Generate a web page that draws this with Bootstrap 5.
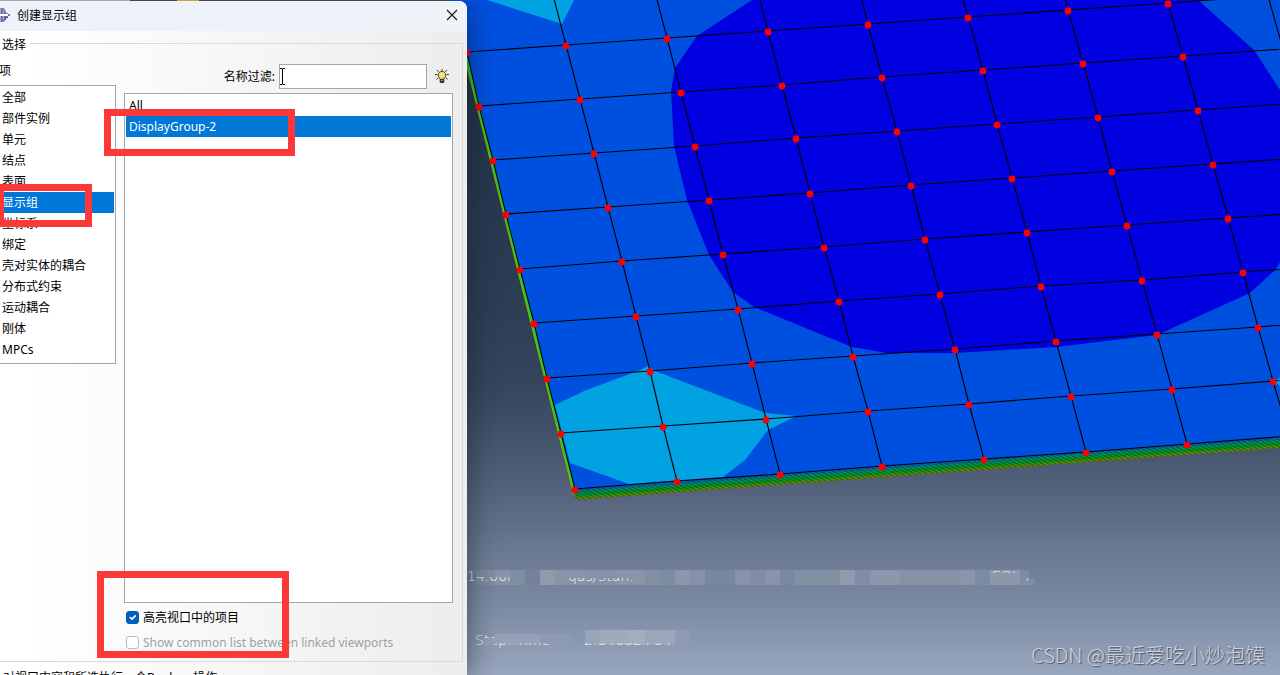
<!DOCTYPE html>
<html lang="zh-CN">
<head>
<meta charset="utf-8">
<meta name="viewport" content="width=device-width, initial-scale=1">
<title>创建显示组</title>
<link href="https://cdn.jsdelivr.net/npm/bootstrap@5.3.0/dist/css/bootstrap.min.css" rel="stylesheet">
<style>
  body { font: 12px/21px "Noto Sans", "Noto Sans CJK SC", sans-serif; color: #000; background: #4d484f; }
  .dialog-pane { width: 467px; padding-top: 1px; background: linear-gradient(90deg, #a8a8a8 130px, #41455c 130px 177px, #d49b3a 177px 199px, #41455c 199px) 0 0 / 450px 1px no-repeat, #0050e0; z-index: 1; }
  .dialog-box { border-top-right-radius: 8px; background: linear-gradient(90deg, #fff 30px, #eee 440px); box-shadow: 2px 4px 28px rgba(20, 24, 32, .5); clip-path: inset(0 -60px 0 0); }
  .title-bar { height: 30px; padding: 0 8px 2px 0; border-top-right-radius: 8px; background: linear-gradient(90deg, #edf2fb, #eff4f9); }
  .title-bar span { margin-left: 7px; }
  .title-bar button, .tip-button { border: 0; background: none; padding: 0; line-height: 0; }
  .group-frame { border: 1px solid #dadada; border-left: 0; margin: 2px 4px 0 0; }
  .group-frame legend { float: none; width: auto; font-size: 12px; line-height: 18px; padding: 3px 4px 0 2px; margin: 0 0 -2px; }
  .items-col { width: 116px; }
  .items-col .caption-line { margin: 0 0 4px -1px; }
  .sunken { background: #fff; border: 1px solid #a5a5aa; padding: 1px; }
  .items-col .sunken { border-left: 0; padding-left: 0; padding-bottom: 3px; }
  .sunken button { display: block; width: 100%; height: 21px; border: 0; background: none; color: #000; padding: 0 2px; text-align: left; line-height: 21px; }
  .sunken button.chosen { background: #0078d7; color: #fff; }
  .results { margin: 0 9px 0 8px; }
  .results .sunken button { padding-left: 3px; }
  .filter-input { width: 148px; height: 25px; border: 1px solid #a5a5aa; background: #fff; padding: 0 4px; }
  .tick-list { padding: 2px 0 6px 2px; }
  .tick-row { height: 25px; gap: 4px; }
  .tick-row .form-check-input { width: 13px; height: 13px; margin: 0; border-color: #999; }
  .tick-row .form-check-input:checked { background-color: #005fb8; border-color: #005fb8; }
  .tick-row .form-check-input:disabled, .tick-row .form-check-input:disabled ~ label { opacity: 1; color: #a0a0a0; border-color: #bbb; }
  .dialog-foot { height: 13px; padding: 5px 3px 0; white-space: nowrap; }
  .marker { position: absolute; border: 7px solid #fc3838; pointer-events: none; z-index: 2; }
  .marker-group { left: 104px; top: 109px; width: 191px; height: 47px; }
  .marker-item { left: -3px; top: 184px; width: 95px; height: 43px; }
  .marker-tick { left: 97px; top: 571px; width: 192px; height: 87px; }
  .text-cursor { position: absolute; left: 1px; top: 4px; }
  .view-pane { background: linear-gradient(#1b2940, #24344a 15%, #2c3d54 46%, #34455c 57%, #47576f 67%, #5a6981 75%, #6b7a92 82%, #7c8ba3 90%, #98a6be); }
  .csdn-mark { position: absolute; right: 15px; bottom: 6px; font: 300 20px/29px "Noto Sans CJK SC", sans-serif; color: #d2d6dd; text-shadow: 1px 1px 1px #475064; white-space: nowrap; }
</style>
<script src="https://cdn.jsdelivr.net/npm/bootstrap@5.3.0/dist/js/bootstrap.bundle.min.js"></script>
</head>
<body class="vh-100 overflow-hidden">
<main class="d-flex h-100 position-relative overflow-hidden">
  <div class="dialog-pane flex-shrink-0 h-100 position-relative">
    <section class="dialog-box d-flex flex-column h-100" aria-label="创建显示组">
      <header class="title-bar d-flex align-items-center flex-shrink-0">
        <svg width="10" height="16" viewBox="0 0 10 16"><path d="M0 1h3l2 1v2h1v2h2v1h2v2H8v1H6v2H5v2l-2 1H0z" fill="#7773ac"/><path d="M0 1h1v14H0zM3 3h1v10H3z" fill="#a5a2ce"/><path d="M0 7h8v2H0z" fill="#fff"/><path d="M5 10h3v1H6v2H5z" fill="#46437b"/></svg>
        <span class="flex-grow-1">创建显示组</span>
        <button type="button" aria-label="关闭"><svg width="14" height="14" viewBox="0 0 14 14"><path d="M2 2l10 10M12 2L2 12" stroke="#1b1b1b" stroke-width="1.2"/></svg></button>
      </header>
      <fieldset class="group-frame d-flex flex-column flex-grow-1">
        <legend>选择</legend>
        <div class="d-flex flex-grow-1">
          <div class="items-col flex-shrink-0 pt-2">
            <div class="caption-line">项</div>
            <div class="sunken">
              <button type="button">全部</button>
              <button type="button">部件实例</button>
              <button type="button">单元</button>
              <button type="button">结点</button>
              <button type="button">表面</button>
              <button type="button" class="chosen">显示组</button>
              <button type="button">坐标系</button>
              <button type="button">绑定</button>
              <button type="button">壳对实体的耦合</button>
              <button type="button">分布式约束</button>
              <button type="button">运动耦合</button>
              <button type="button">刚体</button>
              <button type="button">MPCs</button>
            </div>
          </div>
          <div class="results d-flex flex-column flex-grow-1">
            <div class="d-flex align-items-center justify-content-end mb-1 pt-2 mt-1">
              <label for="filter" class="me-1">名称过滤:</label>
              <div class="position-relative d-flex">
                <input id="filter" type="text" class="filter-input">
                <svg class="text-cursor" width="5" height="17" viewBox="0 0 5 17"><path d="M0 .5h2l.5.5.5-.5h2M2.500 1v15M0 16.500h2l.5-.5.5.5h2" stroke="#000" fill="none"/></svg>
              </div>
              <button type="button" class="tip-button mx-2 me-1" aria-label="提示"><svg width="14" height="15" viewBox="0 0 15 16"><path d="M7.500 0v2M2 1l2 2M13 1l-2 2M0 6h2.500M12.500 6H15M1.500 11l2-1.500M13.500 11l-2-1.500" stroke="#173322"/><path d="M7.500 2.500a4 4 0 0 1 2.700 7L9.500 11h-4l-.7-1.500a4 4 0 0 1 2.700-7z" fill="#f5dc78" stroke="#4b4520"/><path d="M6 4h2v3H6z" fill="#fff0b2"/><path d="M5 11h5v3l-1 1H6l-1-1z" fill="#143427"/><path d="M6 12.500h3" stroke="#9aa89a"/></svg></button>
            </div>
            <div class="sunken flex-grow-1">
              <button type="button">All</button>
              <button type="button" class="chosen">DisplayGroup-2</button>
            </div>
            <div class="tick-list">
              <div class="tick-row d-flex align-items-center"><input class="form-check-input" type="checkbox" id="hl" checked><label for="hl">高亮视口中的项目</label></div>
              <div class="tick-row d-flex align-items-center"><input class="form-check-input" type="checkbox" id="common" disabled><label for="common">Show common list between linked viewports</label></div>
            </div>
          </div>
        </div>
      </fieldset>
      <footer class="dialog-foot flex-shrink-0">对视口内容和所选执行一个Boolean操作</footer>
    </section>
    <div class="marker marker-group"></div>
    <div class="marker marker-item"></div>
    <div class="marker marker-tick"></div>
  </div>
  <div class="view-pane flex-grow-1 h-100 position-relative overflow-hidden">
    <svg class="d-block w-100 h-100" viewBox="467 0 813 675" preserveAspectRatio="xMinYMin slice" role="img" aria-label="网格云图">
      <defs>
        <linearGradient id="rim" gradientUnits="userSpaceOnUse" x1="575" y1="489" x2="575.810" y2="500"><stop offset="0" stop-color="#0058a8"/><stop offset=".3" stop-color="#009888"/><stop offset=".6" stop-color="#00a818"/><stop offset=".85" stop-color="#60a000"/><stop offset="1" stop-color="#907800"/></linearGradient>
        <pattern id="hatch" width="4" height="3" patternUnits="userSpaceOnUse" patternTransform="rotate(28)"><path d="M0 1h4" stroke="#002818" stroke-width="1.200" opacity=".7"/></pattern>
        <clipPath id="low1"><path d="M467 568h8v16h-8zM475 577h40v10h-40zM568 578h70v10h-70z"/></clipPath>
        <clipPath id="top1"><path d="M990 568h25v5h-25zM1022 578h8v4h-8z"/></clipPath>
        <clipPath id="low2"><path d="M470 630h14v18h-14zM484 630h10v8h-10zM494 643h200v6h-200z"/></clipPath>
      </defs>
      <path d="M467 0H1280V438L575 490 467 56z" fill="#0050e0"/>
      <path d="M752 0L697 36 675 68 671 91 674 146 687 200 709 255 733 292 754 307 852 347 887 353H955L1056 347 1157 335 1250 293 1276 269 1280 262V90L1254 50 1198 0z" fill="#0000e0"/>
      <path d="M487 0L562 24 574 0zM555 405L584 391 640 370 648 366 655 371 765 413 797 416 768 430 745 460 723 477 629 484 570 463zM1273 381l7-3v8z" fill="#00a2e2"/>
      <path d="M575 490L1280 438V448L575 500z" fill="url(#rim)"/>
      <path d="M575 490L1280 438V448L575 500z" fill="url(#hatch)"/>
      <path d="M467 65L574 494" stroke="#78b000" stroke-width="2" fill="none"/>
      <path d="M467 59L575 492" stroke="#00d848" stroke-width="2" fill="none"/>
      <path id="mesh" fill="none" stroke="#000" stroke-width="1.100"/>
      <g id="nodes" fill="#f00"></g>
      <g id="mosaic"></g>
      <g fill="#f4f6fa" font-family="DejaVu Sans" font-weight="200" font-size="14">
        <g clip-path="url(#low1)"><text x="467" y="581">14.00r</text><text x="568" y="581">qas/Stan.</text></g>
        <g clip-path="url(#top1)"><text x="991" y="581">COS r</text></g>
        <g clip-path="url(#low2)"><text x="475" y="645">Step: Time</text><text x="584" y="645">2.0400E+04</text></g>
      </g>
    </svg>
    <div class="csdn-mark">CSDN @最近爱吃小炒泡馍</div>
  </div>
</main>
<script>
  // Mesh nodes, one array per row of [x, y]
  const rows = [
    [[467,53],[566,46],[667,39],[768,32],[868,25],[968,18],[1068,11],[1168,4],[1268,-3]],
    [[479,107],[580,100],[681,93],[782,86],[882,78],[983,71],[1083,64],[1183,57],[1283,50]],
    [[493,161],[594,154],[695,147],[796,139],[897,132],[997,125],[1098,118],[1198,111],[1298,104]],
    [[506,215],[608,208],[709,201],[810,194],[911,186],[1012,179],[1112,172],[1213,165],[1314,158]],
    [[520,270],[622,262],[723,255],[824,248],[925,240],[1027,233],[1127,226],[1228,219],[1329,212]],
    [[534,324],[636,317],[738,310],[839,302],[940,295],[1041,287],[1142,281],[1243,273],[1344,266]],
    [[547,379],[650,372],[752,364],[853,357],[955,350],[1056,342],[1157,335],[1258,328],[1359,320]],
    [[561,434],[663,427],[766,420],[868,412],[969,405],[1071,397],[1172,390],[1273,382],[1374,374]],
    [[575,490],[677,482],[780,475],[882,467],[984,460],[1086,453],[1187,445],[1289,437],[1390,429]]
  ];
  const line = pts => 'M' + pts.map(p => p[0] + ' ' + (p[1] - 1)).join('L');
  let d = rows.map(line).join('');
  for (let c = 0; c < 9; c++) {
    const col = rows.map(r => r[c]);
    const first = [2 * col[0][0] - col[1][0], 2 * col[0][1] - col[1][1]];
    d += line(c ? [first, ...col] : col);
  }
  document.getElementById('mesh').setAttribute('d', d);
  document.getElementById('nodes').innerHTML = rows.flat().map(p => `<circle cx="${p[0]}" cy="${p[1]}" r="3.400"/>`).join('');
  // Mosaic tiles: [x, y, width, height, colour]
  const tiles = [
    [476,570,19,15,'#7f8c9f'],[495,570,15,15,'#8793a8'],[510,570,15,15,'#808ea2'],[525,570,15,15,'#74829b'],
    [540,570,15,15,'#9199ad'],[555,570,30,15,'#8994a8'],[585,570,30,15,'#8491a6'],[615,570,30,15,'#8a95aa'],[645,570,15,15,'#8390a4'],
    [660,570,15,15,'#7d8da1'],[675,570,15,15,'#8c97ac'],[690,570,15,15,'#8591a6'],[705,570,30,15,'#7787a0'],
    [735,570,15,15,'#8793a8'],[750,570,15,15,'#808da2'],[765,570,15,15,'#8894a9'],[780,570,15,15,'#7a88a2'],
    [795,570,45,15,'#8290a3'],[840,570,15,15,'#929aae'],[855,570,15,15,'#818da7'],[870,570,30,15,'#8c97ab'],
    [900,570,60,15,'#8591a5'],[960,570,15,15,'#8a96aa'],[975,570,15,15,'#7c8ba1'],[990,570,30,15,'#8c97ab'],[1020,570,9,9,'#7d8ba1'],[1020,579,15,6,'#818fa6'],
    [494,634,46,11,'#95a1b5'],[540,634,30,11,'#8d9ab0'],[585,630,15,15,'#98a4b8'],[600,630,30,15,'#a0aabd'],[630,630,15,15,'#a4adc0'],
    [645,630,30,15,'#9aa6ba'],[675,630,15,15,'#8e9bb2'],[484,637,10,8,'#95a1b5']
  ];
  document.getElementById('mosaic').innerHTML = tiles.map(t => `<rect x="${t[0]}" y="${t[1]}" width="${t[2]}" height="${t[3]}" fill="${t[4]}"/>`).join('');
</script>
</body>
</html>
